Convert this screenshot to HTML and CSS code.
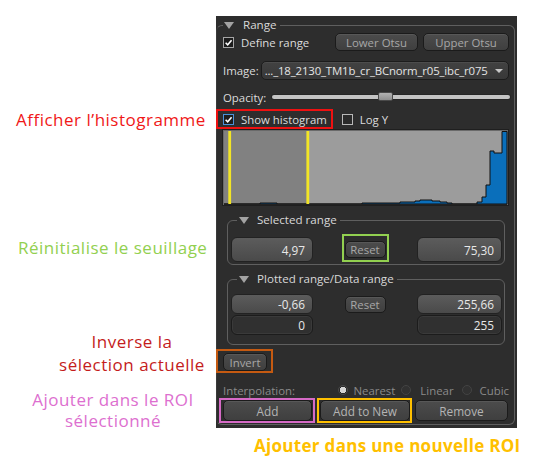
FILE: index.html
```html
<!DOCTYPE html>
<html>
<head>
<meta charset="utf-8">
<link rel="stylesheet" href="styles.css">
</head>
<body>
<div class="page">
  <div class="note n-hist">Afficher l’histogramme</div>
  <div class="note n-reset">Réinitialise le seuillage</div>
  <div class="note n-invert">Inverse la<br>sélection actuelle</div>
  <div class="note n-add">Ajouter dans le ROI<br>sélectionné</div>
  <div class="note n-new">Ajouter dans une nouvelle ROI</div>

  <div class="panel">
    <fieldset class="group outer">
      <legend><span class="tri"></span><span>Range</span></legend>

      <div class="row r1">
        <span class="chk"><svg viewBox="0 0 10 10" width="10" height="10"><path d="M1.8 5.2 L4.1 7.6 L8.4 2.4" fill="none" stroke="#fff" stroke-width="1.7"/></svg></span>
        <span class="lbl">Define range</span>
        <span class="btn otsu lower">Lower Otsu</span>
        <span class="btn otsu upper">Upper Otsu</span>
      </div>

      <div class="row r2">
        <span class="lbl">Image:</span>
        <div class="combo"><span class="combo-text">..._18_2130_TM1b_cr_BCnorm_r05_ibc_r075</span><span class="arrow"></span></div>
      </div>

      <div class="row r3">
        <span class="lbl">Opacity:</span>
        <div class="slider"><div class="groove"></div><div class="handle"></div></div>
      </div>

      <div class="row r4">
        <span class="hl hl-red">
          <span class="chk focus"><svg viewBox="0 0 10 10" width="10" height="10"><path d="M1.8 5.2 L4.1 7.6 L8.4 2.4" fill="none" stroke="#fff" stroke-width="1.7"/></svg></span>
          <span class="lbl">Show histogram</span>
        </span>
        <span class="chk empty logy"></span>
        <span class="lbl">Log Y</span>
      </div>

      <div class="hist">
        <svg viewBox="0 0 287 77" width="287" height="77">
          <rect x="0" y="0" width="287" height="77" fill="#1f1f1f"/>
          <rect x="1" y="1" width="285" height="75" fill="#6a6a6a"/>
          <rect x="2" y="2" width="283" height="73" fill="#9c9c9c"/>
          <rect x="2" y="2" width="83" height="73" fill="#818181"/>
          <path d="M2 75 H38 V74 H55 V75 H140 V74 H178 V73 H193 V72 H198 V71 H210 V72 H218 V73 H225 V74 H230 V75 H255 V73 H260 V68 H264 V56 H268 V22 H272 V24 H280 V2.5 H285 V75 Z" fill="#0a6fbb" stroke="#111" stroke-width="1"/>
          <line x1="2" y1="75.5" x2="285" y2="75.5" stroke="#222" stroke-width="1"/>
          <rect x="6.3" y="2" width="2.8" height="73" fill="#f2e526"/>
          <rect x="84.4" y="2" width="2.8" height="73" fill="#f2e526"/>
        </svg>
      </div>

      <fieldset class="group sub sel">
        <legend><span class="tri small"></span><span>Selected range</span></legend>
        <div class="vals">
          <span class="fld">4,97</span>
          <span class="mid"><span class="hl hl-green"><span class="btn reset">Reset</span></span></span>
          <span class="fld">75,30</span>
        </div>
      </fieldset>

      <fieldset class="group sub plot">
        <legend><span class="tri small"></span><span>Plotted range/Data range</span></legend>
        <div class="vals">
          <span class="fld">-0,66</span>
          <span class="mid"><span class="btn reset">Reset</span></span>
          <span class="fld">255,66</span>
        </div>
        <div class="vals second">
          <span class="fld dark">0</span>
          <span class="mid"></span>
          <span class="fld dark">255</span>
        </div>
      </fieldset>

      <div class="row r-inv">
        <span class="hl hl-orange"><span class="btn invert">Invert</span></span>
      </div>

      <div class="row r-interp">
        <span class="lbl dim">Interpolation:</span>
        <span class="radios">
          <span class="radio on"></span><span class="lbl dim rl-near">Nearest</span>
          <span class="radio r-lin"></span><span class="lbl dim rl-lin">Linear</span>
          <span class="radio r-cub"></span><span class="lbl dim rl-cub">Cubic</span>
        </span>
      </div>

      <div class="row r-btns">
        <span class="hl hl-pink"><span class="btn big add">Add</span></span>
        <span class="hl hl-yellow"><span class="btn big addnew">Add to New</span></span>
        <span class="btn big remove">Remove</span>
      </div>
    </fieldset>
  </div>
</div>
</body>
</html>
```

FILE: styles.css
```css
* { box-sizing: border-box; }
html, body { margin: 0; padding: 0; background: #ffffff; }
body { font-family: "Open Sans", "DejaVu Sans", sans-serif; }

.page { position: relative; width: 533px; height: 462px; padding-top: 16px; overflow: hidden; }

/* annotations */
.note { position: absolute; font-size: 17px; line-height: 20px; letter-spacing: 0.5px; white-space: nowrap; }
.n-hist { left: 16px; top: 110px; color: #f01818; }
.n-reset { left: 18px; top: 238px; color: #92d050; }
.n-invert { left: 48px; top: 330px; width: 168px; text-align: center; line-height: 23px; color: #c41c1c; }
.n-add { left: 18px; top: 389px; width: 190px; text-align: center; line-height: 21px; color: #dd6fcf; }
.n-new { left: 254px; top: 436px; color: #ffc000; font-weight: 700; letter-spacing: 0.3px; }

/* panel */
.panel {
  margin-left: 216px; width: 301px; height: 412px;
  background: #2d2d2d; padding-top: 1px;
  font-size: 11.4px; color: #dcdcdc;
}
.group { margin: 0; border: 1px solid #5f5f5f; border-radius: 6px; min-width: 0; }
.group legend {
  display: flex; align-items: center; height: 16px; line-height: 16px;
  color: #d8d8d8; font-size: 11.6px;
}
.outer { padding: 0 5px 1px 6px; width: 299px; border-left-color: #3a3a3a; }
.outer > legend { padding: 0 3px 0 1px; gap: 9px; }
.tri {
  width: 0; height: 0; border-left: 5px solid transparent; border-right: 5px solid transparent;
  border-top: 7px solid #a3a3a3;
}

.row { display: flex; align-items: center; }
.lbl { white-space: nowrap; }
.dim { color: #8a8a8a; }

.chk {
  width: 11px; height: 11px; border: 1px solid #a5a5a5; background: #1c1c1c;
  display: inline-flex; align-items: center; justify-content: center; flex: none;
}
.chk svg { display: block; width: 9px; height: 9px; }
.chk.focus { border-color: #4a90d9; }
.chk.empty { border-color: #b8b8b8; background: #2a2a2a; }

.btn {
  display: inline-flex; align-items: center; justify-content: center;
  height: 18px; border: 1px solid #1b1b1b; border-radius: 5px;
  background: linear-gradient(#4c4c4c, #3f3f3f);
  box-shadow: inset 0 1px 0 rgba(255,255,255,0.07);
  color: #a7a7a7; white-space: nowrap; flex: none;
}

.r1 { height: 18px; }
.r1 .lbl { margin-left: 7px; }
.otsu.lower { margin-left: auto; width: 83px; }
.otsu.upper { margin-left: 5px; width: 86px; }

.r2 { height: 19px; margin-top: 10px; }
.combo {
  flex: 1; margin-left: 2px; height: 19px; border: 1px solid #1c1c1c; border-radius: 5px;
  background: linear-gradient(#424242, #383838);
  box-shadow: inset 0 1px 0 rgba(255,255,255,0.06);
  display: flex; align-items: center; padding-left: 3px; color: #e4e4e4;
}
.combo-text { flex: 1; white-space: nowrap; overflow: hidden; letter-spacing: -0.15px; }
.arrow {
  width: 0; height: 0; margin: 0 5px 0 6px;
  border-left: 4px solid transparent; border-right: 4px solid transparent; border-top: 4px solid #c8c8c8;
}

.r3 { height: 18px; margin-top: 8px; }
.slider { position: relative; flex: 1; margin-left: 6px; height: 18px; }
.groove {
  position: absolute; left: 0; right: -1px; top: 7px; height: 4px;
  background: #c4c4c4; border-radius: 2px; box-shadow: 0 0 0 1px #262626;
}
.handle {
  position: absolute; left: 106px; top: 4px; width: 15px; height: 9px;
  background: linear-gradient(#b2b2b2, #8f8f8f); border: 1px solid #4a4a4a; border-radius: 2px;
}

.r4 { height: 20px; margin-top: 3px; }
.hl { display: inline-flex; align-items: center; border: 2px solid transparent; flex: none; }
.hl-red { border-color: #ee1111; height: 20px; margin-left: -7px; padding: 0 4px 0 5px; }
.hl-red .lbl { margin-left: 7px; }
.logy { margin-left: 9px; }
.logy + .lbl { margin-left: 7px; }

.hist { margin-left: -1px; height: 77px; }
.hist svg { display: block; }

.sub { margin-left: 4px; width: 278px; }
.sub > legend { margin-left: 6px; padding: 0 3px 0 2px; gap: 8px; }
.sel { margin-top: 6px; padding: 0 2px 9px 3px; }
.plot { margin-top: 6px; padding: 0 2px 9px 3px; }

.vals { display: grid; grid-template-columns: 82px 1fr 85px; height: 18px; margin-top: 9px; align-items: center; }
.plot .vals { margin-top: 7px; height: 20px; }
.plot .vals.second { margin-top: 1px; }
.fld {
  height: 100%; border: 1px solid #222; border-radius: 6px;
  background: linear-gradient(#5c5c5c, #4a4a4a);
  display: flex; align-items: center; justify-content: flex-end; padding-right: 7px;
  color: #e8e8e8; font-size: 11.8px;
}
.fld.dark { background: #303030; border-color: #1c1c1c; box-shadow: inset 0 0 0 1px #3a3a3a; }
.mid { display: flex; justify-content: center; }
.btn.reset { width: 41px; height: 17px; }
.hl-green { border-color: #92d050; padding: 5px 1px 2px 1px; margin-top: -3px; }

.r-inv { margin-top: 4px; }
.hl-orange { border-color: #c55a11; margin-left: -7px; padding: 2px 4px 0 5px; }
.btn.invert { width: 44px; height: 18px; }

.r-interp { height: 16px; margin-top: 9px; }
.radios { margin-left: auto; display: flex; align-items: center; }
.radio {
  width: 10px; height: 10px; border-radius: 50%; border: 1px solid #434343; background: #313131; flex: none;
}
.radio.on { background: radial-gradient(circle, #d4d4d4 0 3px, #262626 3.5px); border-color: #4a4a4a; }
.rl-near { margin-left: 6px; }
.r-lin { margin-left: 6px; }
.rl-lin { margin-left: 9px; }
.r-cub { margin-left: 8px; }
.rl-cub { margin-left: 8px; }

.r-btns { height: 25px; }
.btn.big { height: 21px; color: #b4b4b4; font-size: 11.8px; }
.hl-pink { border-color: #d66ac6; margin-left: -4px; padding: 0 1px 0 2px; }
.btn.add { width: 89px; }
.hl-yellow { border-color: #ffc000; margin-left: 2px; padding: 0 0 0 1px; }
.btn.addnew { width: 90px; }
.btn.remove { margin-left: 3px; width: 93px; }
```
